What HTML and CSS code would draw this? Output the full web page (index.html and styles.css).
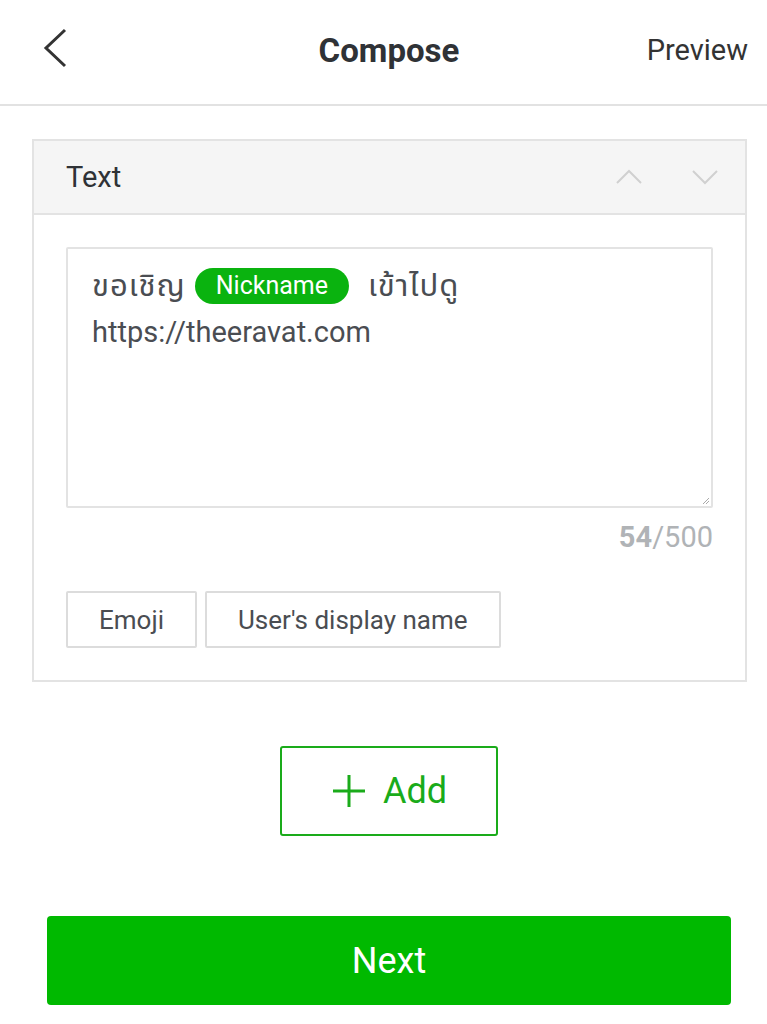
FILE: index.html
```html
<!DOCTYPE html>
<html lang="th">
<head>
    <meta charset="UTF-8">
    <meta name="viewport" content="width=device-width, initial-scale=1.0">
    <title>Compose</title>
    <link rel="stylesheet" href="styles.css">
</head>
<body>
<div class="header">
    <span class="back">
        <svg width="26" height="40" viewBox="0 0 26 40"><path d="M23 2 L4 20 L23 38" fill="none" stroke="#333" stroke-width="3"/></svg>
    </span>
    <h1>Compose</h1>
    <span class="preview">Preview</span>
</div>

<div class="card">
    <div class="card-head">
        <span>Text</span>
        <div class="arrows">
            <svg width="28" height="16" viewBox="0 0 28 16"><path d="M2 14 L14 2 L26 14" fill="none" stroke="#d0d0d0" stroke-width="2"/></svg>
            <svg width="28" height="16" viewBox="0 0 28 16"><path d="M2 2 L14 14 L26 2" fill="none" stroke="#d0d0d0" stroke-width="2"/></svg>
        </div>
    </div>
    <div class="card-body">
        <div class="editor">
            <div class="line"><span class="th">ขอเชิญ</span><span class="tag">Nickname</span><span class="th">เข้าไปดู</span></div>
            <div class="line">https://theeravat.com</div>
            <svg class="grip" width="8" height="8" viewBox="0 0 8 8"><path d="M7 1 L1 7 M7 4 L4 7" stroke="#aaa" stroke-width="1"/></svg>
        </div>
        <div class="counter"><b>54</b>/500</div>
        <div class="tools">
            <button class="tool">Emoji</button>
            <button class="tool">User's display name</button>
        </div>
    </div>
</div>

<div class="add-wrap">
    <button class="add">
        <svg width="36" height="36" viewBox="0 0 36 36"><path d="M18 2 V34 M2 18 H34" stroke="#1aab1a" stroke-width="3"/></svg>
        Add
    </button>
</div>

<button class="next">Next</button>
</body>
</html>
```

FILE: styles.css
```css
body {
    margin: 0;
    font-family: Roboto, "Noto Sans", "Noto Sans Thai", "DejaVu Sans", sans-serif;
    background-color: #fff;
    color: #333;
}
.header {
    height: 104px;
    border-bottom: 2px solid #e2e2e2;
    display: flex;
    align-items: center;
    justify-content: space-between;
    padding: 0 19px 0 42px;
    position: relative;
}
.back {
    display: flex;
    margin-top: -8px;
}
.header h1 {
    position: absolute;
    left: 11px;
    right: 0;
    margin: -4px 0 0;
    text-align: center;
    font-size: 33px;
    font-weight: 700;
    color: #2f3236;
    pointer-events: none;
}
.preview {
    font-size: 29px;
    color: #333;
    margin-top: -4px;
}
.card {
    margin: 33px 20px 0 32px;
    border: 2px solid #e3e3e3;
}
.card-head {
    height: 72px;
    background-color: #f5f5f5;
    border-bottom: 2px solid #e3e3e3;
    display: flex;
    align-items: center;
    justify-content: space-between;
    padding: 0 26px 0 32px;
    font-size: 29px;
    color: #2f3236;
}
.arrows {
    display: flex;
    gap: 48px;
}
.card-body {
    padding: 32px;
}
.editor {
    box-sizing: border-box;
    height: 261px;
    border: 2px solid #e3e3e3;
    border-radius: 2px;
    padding: 14px 24px;
    position: relative;
    font-size: 29px;
    color: #4a4d52;
}
.line {
    height: 46px;
    display: flex;
    align-items: center;
    white-space: pre;
}
.th {
    font-size: 31px;
    letter-spacing: 1px;
}
.tag {
    display: inline-block;
    background-color: #0ab30f;
    color: #fff;
    font-size: 25px;
    line-height: 36px;
    padding: 0 21px;
    border-radius: 18px;
    margin: 0 19px 0 9px;
}
.grip {
    position: absolute;
    right: 1px;
    bottom: 1px;
}
.counter {
    text-align: right;
    font-size: 29px;
    color: #b0b3b6;
    margin-top: 12px;
}
.counter b {
    font-weight: 700;
}
.tools {
    display: flex;
    gap: 8px;
    margin-top: 37px;
}
.tool {
    height: 57px;
    padding: 0 31px;
    border: 2px solid #dcdcdc;
    border-radius: 2px;
    background-color: #fff;
    font-family: inherit;
    font-size: 26px;
    color: #4a4d52;
}
.add-wrap {
    display: flex;
    justify-content: center;
    margin-top: 64px;
    padding-left: 11px;
}
.add {
    width: 218px;
    height: 90px;
    border: 2px solid #1aab1a;
    border-radius: 3px;
    background-color: #fff;
    color: #1aab1a;
    font-family: inherit;
    font-size: 36px;
    display: flex;
    align-items: center;
    justify-content: center;
    gap: 16px;
}
.next {
    display: block;
    margin: 80px 36px 0 47px;
    width: 684px;
    height: 89px;
    border: none;
    border-radius: 4px;
    background-color: #00b900;
    color: #fff;
    font-family: inherit;
    font-size: 36px;
}
```
